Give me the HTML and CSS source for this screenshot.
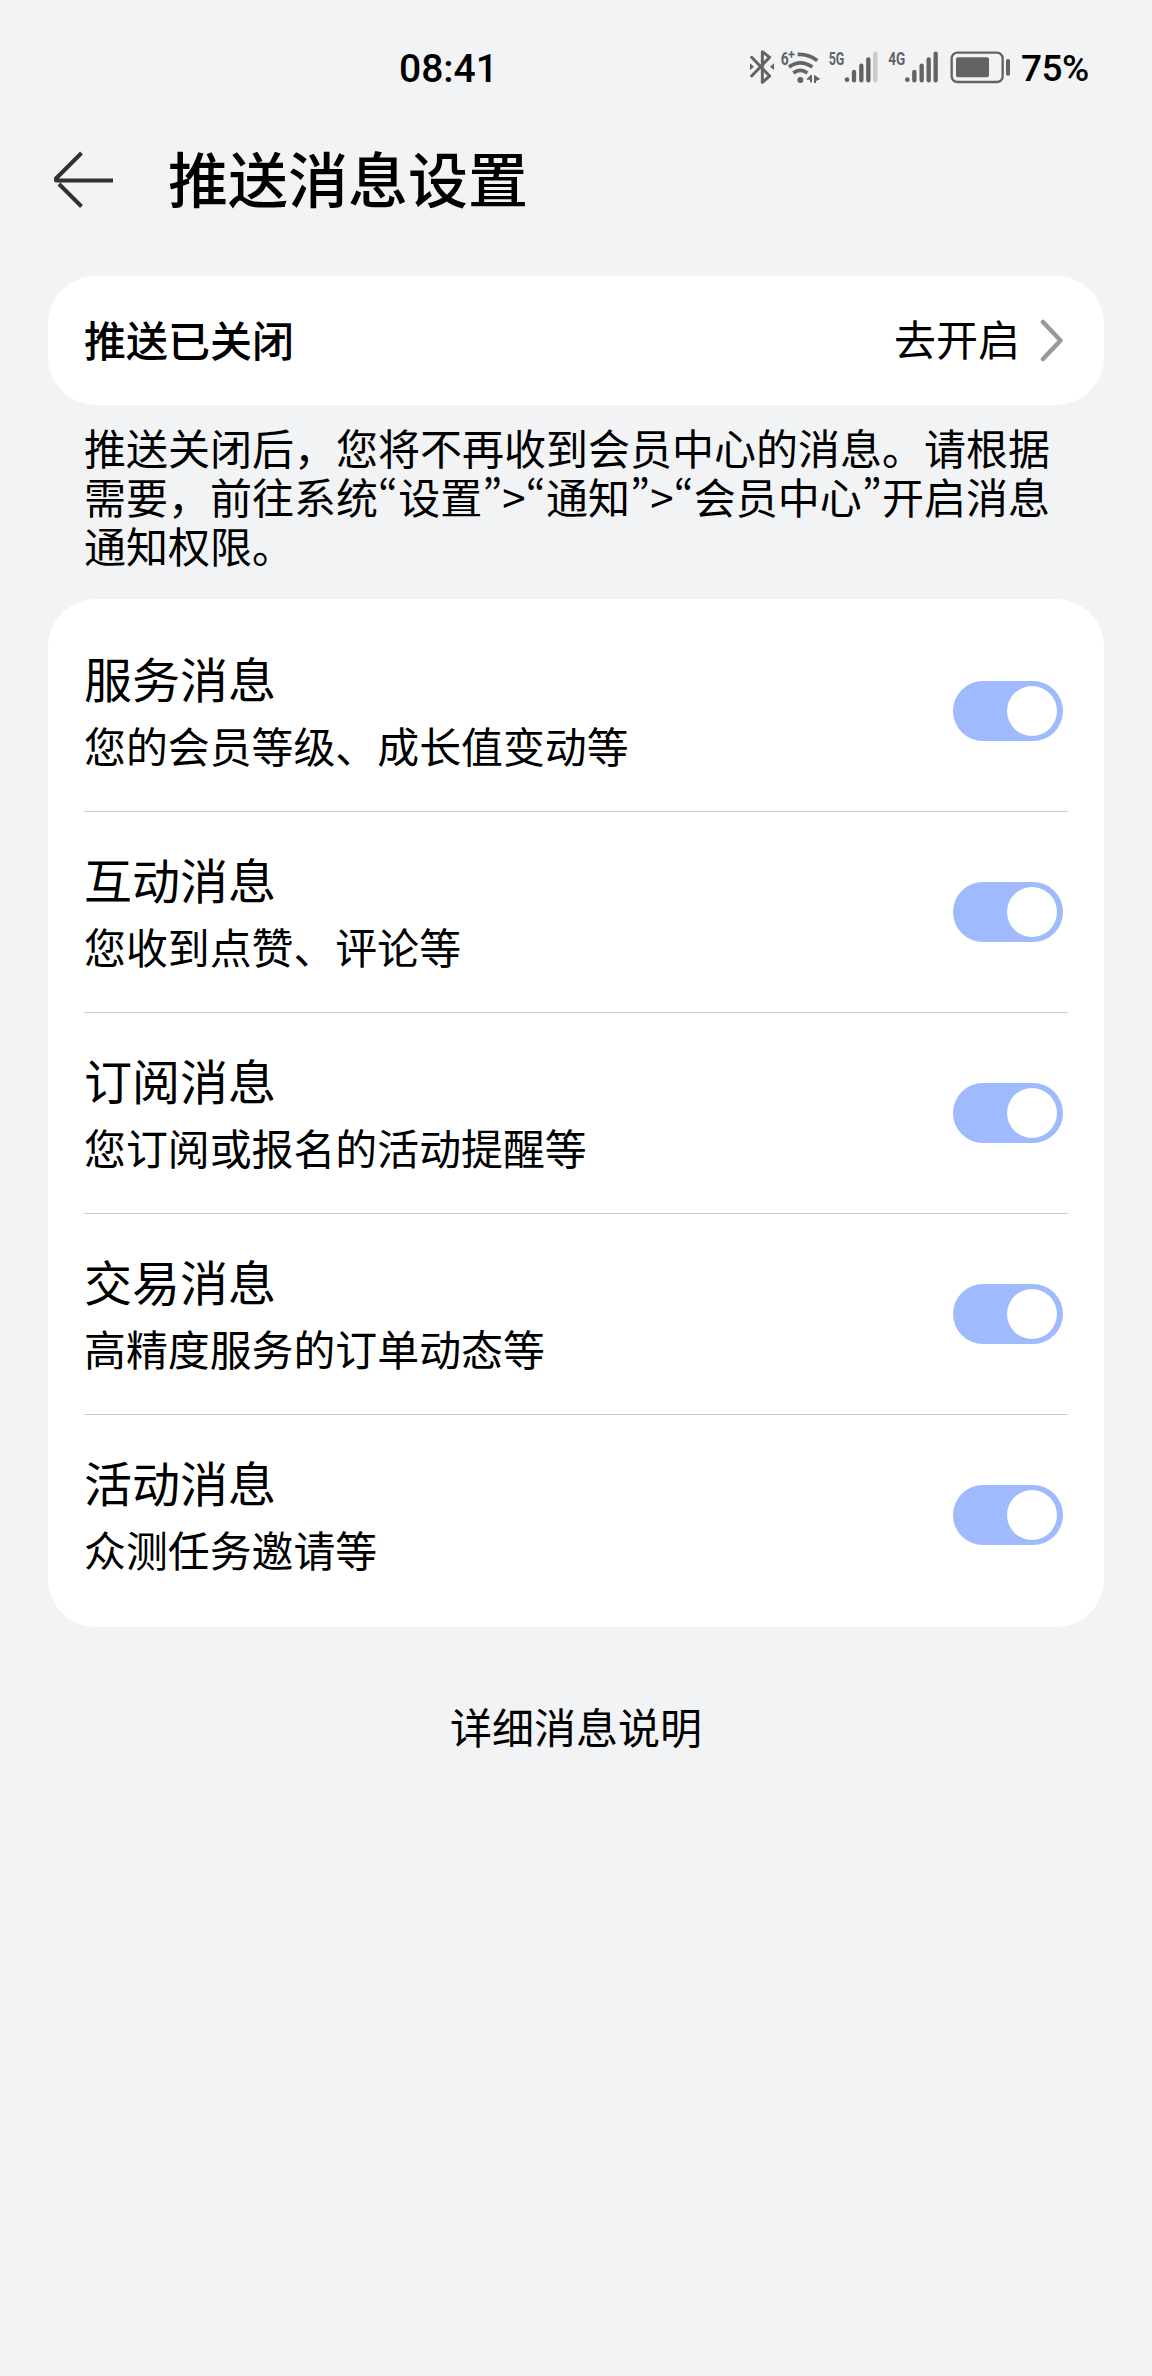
FILE: index.html
```html
<!DOCTYPE html>
<html lang="zh-CN">
    <head>
        <meta charset="utf-8">
        <meta name="viewport" content="width=device-width">
        <title>推送消息设置</title>
        <link rel="stylesheet" href="styles.css">
    </head>
    <body>
        <div class="status">
            <div class="time">08:41</div>
            <div class="icons">
                <!-- bluetooth -->
                <svg width="26" height="36" viewBox="57 57 78 108">
                    <path class="line" stroke-width="9" d="M65 82L119 138L97 157V65L119 82L65 138"/>
                    <path class="fill" d="M60 100L72 110L60 120zM132 100L120 110L132 120z"/>
                </svg>
                <!-- wifi -->
                <svg class="wifi" width="42" height="36" viewBox="150 57 126 108">
                    <text class="tag" x="152" y="104" font-size="54" textLength="24" lengthAdjust="spacingAndGlyphs">6</text>
                    <path class="line butt" stroke-width="5" d="M175 73H194M184.500 63V83"/>
                    <path class="line butt" stroke-width="11" d="M203 73Q238 72 262 92M177 111Q211 86 247 111M190 129Q211 113 232 129"/>
                    <circle class="fill" cx="211" cy="150" r="9"/>
                    <path class="fill" d="M230 147L242 135H246V157H240V149H230zM252 134L271 147L258 153V159H252z"/>
                </svg>
                <svg class="sig5" width="52" height="36" viewBox="293 57 156 108">
                    <text class="tag" x="295" y="105" font-size="54" textLength="47" lengthAdjust="spacingAndGlyphs">5G</text>
                    <circle class="fill" cx="350" cy="149" r="7"/>
                    <path class="line" stroke-width="13" d="M371 126V151M393 107V151M414 88V151"/>
                    <path class="line weak" stroke-width="13" d="M435 71V151"/>
                </svg>
                <svg class="sig4" width="52" height="36" viewBox="475 57 156 108">
                    <text class="tag" x="476" y="105" font-size="54" textLength="51" lengthAdjust="spacingAndGlyphs">4G</text>
                    <circle class="fill" cx="533" cy="149" r="7"/>
                    <path class="line" stroke-width="13" d="M554 126V151M576 107V151M597 88V151M618 71V151"/>
                </svg>
                <!-- battery -->
                <svg class="battery" width="62" height="36" viewBox="660 57 186 108">
                    <rect class="line" stroke-width="7" x="665" y="68" width="153" height="88" rx="17"/>
                    <rect class="fill" x="678" y="82" width="99" height="60" rx="6"/>
                    <rect class="fill" x="828" y="87" width="12" height="50" rx="5"/>
                </svg>
            </div>
            <div class="percent">75%</div>
        </div>

        <div class="header">
            <svg width="62" height="58" viewBox="0 0 62 58">
                <path d="M28.500 2L3 27.500V29.500H60M6 33L28.500 55.500"/>
            </svg>
            <div class="title">推送消息设置</div>
        </div>

        <div class="card push">
            <div class="push-name">推送已关闭</div>
            <div class="push-open">去开启</div>
            <svg width="24" height="44" viewBox="0 0 24 44"><path d="M3 3L20.500 21.500L3 40"/></svg>
        </div>
        <div class="tip">推送关闭后，您将不再收到会员中心的消息。请根据需要，前往系统<span class="q">“</span>设置<span class="q">”&gt;“</span>通知<span class="q">”&gt;“</span>会员中心<span class="q">”</span>开启消息通知权限。</div>

        <div class="card list">
            <div class="row">
                <div>
                    <div class="name">服务消息</div>
                    <div class="desc">您的会员等级、成长值变动等</div>
                </div>
                <div class="switch"><div class="knob"></div></div>
            </div>
            <div class="row">
                <div>
                    <div class="name">互动消息</div>
                    <div class="desc">您收到点赞、评论等</div>
                </div>
                <div class="switch"><div class="knob"></div></div>
            </div>
            <div class="row">
                <div>
                    <div class="name">订阅消息</div>
                    <div class="desc">您订阅或报名的活动提醒等</div>
                </div>
                <div class="switch"><div class="knob"></div></div>
            </div>
            <div class="row">
                <div>
                    <div class="name">交易消息</div>
                    <div class="desc">高精度服务的订单动态等</div>
                </div>
                <div class="switch"><div class="knob"></div></div>
            </div>
            <div class="row">
                <div>
                    <div class="name">活动消息</div>
                    <div class="desc">众测任务邀请等</div>
                </div>
                <div class="switch"><div class="knob"></div></div>
            </div>
        </div>

        <div class="more">详细消息说明</div>
    </body>
</html>
```

FILE: styles.css
```css
*{box-sizing:border-box;}
body{
    margin:0;
    min-height:2376px;
    background:#f2f3f5;
    color:#000;
    font-family:"Noto Sans CJK SC", sans-serif;
    font-size:42px;
}
svg{display:block;flex:none;fill:none;}

/* status bar */
.status
{
    display:flex;
    align-items:center;
    height:134px;
    padding-left:399px;
    font-family:Roboto, sans-serif;
    font-weight:500;
}
.time{width:350px;padding-top:3px;font-size:39px;line-height:40px;}
.icons{display:flex;height:36px;}
.wifi{margin-left:5px;}
.sig5{margin-left:6px;}
.sig4{margin-left:8px;}
.battery{margin-left:10px;}
.percent{margin-left:9px;padding-top:3px;font-size:37px;line-height:40px;letter-spacing:-.5px;}
.line{stroke:#626365;stroke-linecap:round;stroke-linejoin:round;}
.butt{stroke-linecap:butt;}
.weak{stroke:#c9cacc;}
.fill{fill:#626365;}
.tag{fill:#626365;font-family:Roboto, sans-serif;font-weight:700;}

.header
{
    display:flex;
    align-items:center;
    height:92px;
    padding-left:53px;
}
.header svg{stroke:#303133;stroke-width:4;stroke-linejoin:round;}
.title{margin-left:53px;padding-bottom:6px;font-size:60px;line-height:86px;font-weight:500;}

.card{margin:0 48px;background:#fff;border-radius:48px;}
.push
{
    display:flex;
    align-items:center;
    height:129px;
    margin-top:50px;
    padding:0 40px 0 36px;
}
.push-name{flex:1;padding-bottom:5px;font-weight:500;}
.push-open{margin-right:20px;padding-bottom:6px;}
.push svg{stroke:#999;stroke-width:4.5;stroke-linecap:round;stroke-linejoin:round;}
.tip{height:194px;padding:17px 80px 0 84px;line-height:49px;}
/* narrow quotes */
.q{font-feature-settings:"pwid";letter-spacing:.2px;}

.list{height:1028px;padding:12px 36px 0;}
.row
{
    display:flex;
    align-items:center;
    justify-content:space-between;
    height:201px;
    padding-right:5px;
    border-bottom:1px solid #c8c9cb;
}
.row:last-child{height:200px;border-bottom:none;}
.name{font-size:48px;line-height:66px;}
.desc{padding-top:2px;font-size:41.9px;line-height:66px;}
.switch{width:110px;height:60px;padding:5px 6px 5px 54px;border-radius:30px;background:#9fbbfd;}
.knob{width:50px;height:50px;border-radius:50%;background:#fff;}

.more{margin-top:68px;text-align:center;line-height:62px;}
```
